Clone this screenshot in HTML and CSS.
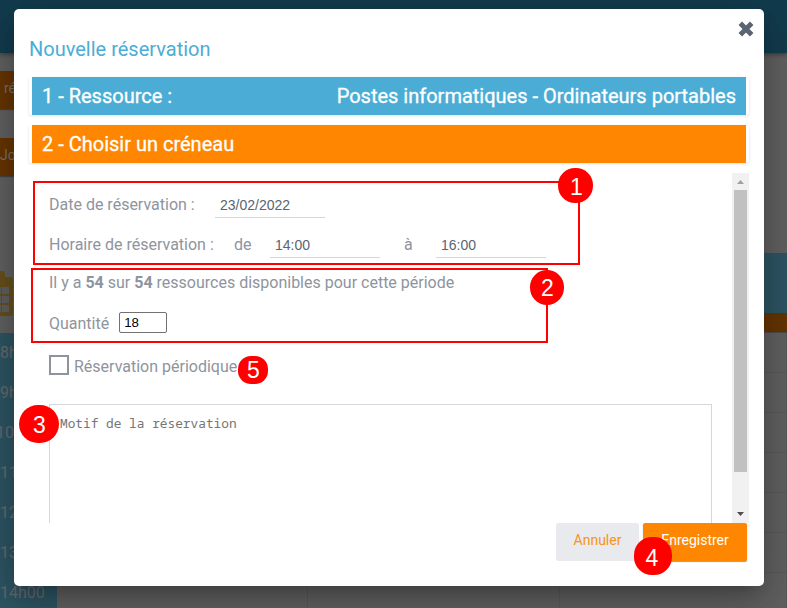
FILE: index.html
```
<!DOCTYPE html>
<html lang="fr">
<head>
<meta charset="utf-8">
<title>Nouvelle réservation</title>
<link rel="stylesheet" href="styles.css">
</head>
<body>
<div class="page">
  <header class="topbar"></header>
  <div class="toolbar"><div class="tab">e ré</div><div class="tab tab-day">Jo</div></div>
  <div class="planning">
    <div class="hours">
      <div class="corner">
        <svg width="14" height="46" viewBox="0 0 14 46"><path d="M0 0h2q3 0 3 3v3h5q3 0 3 3v33q0 3-3 3H0z" fill="#66501c"/><path d="M0 16h1v7H0zM2 16h7v7H2zM0 25h1v7H0zM2 25h7v7H2zM0 34h1v7H0zM2 34h7v7H2z" fill="#606060"/></svg>
      </div>
      <div class="hour">8h00</div><div class="hour">9h00</div><div class="hour hour-long">10h00</div><div class="hour">11h00</div><div class="hour">12h00</div><div class="hour">13h00</div><div class="hour">14h00</div>
    </div>
    <div class="days">
      <div class="dayhead"></div>
      <div class="allday"></div>
      <div class="slots">
        <i></i><i></i><i></i><i></i><i></i><i></i><i></i><i></i><i></i><i></i><i></i><i></i><i></i><i></i><i></i><i></i><i></i><i></i><i></i><i></i><i></i>
      </div>
    </div>
  </div>
</div>

<div class="modal">
  <svg class="close" width="18" height="18" viewBox="0 0 18 18"><path d="M3.300 3.300l11.400 11.400M14.700 3.300L3.300 14.700" stroke="#5a6472" stroke-width="5" stroke-linecap="butt"/></svg>
  <h1 class="title">Nouvelle réservation</h1>
  <div class="step"><div class="bar bar-blue"><span>1 - Ressource :</span><span>Postes informatiques - Ordinateurs portables</span></div></div>
  <div class="step"><div class="bar bar-orange"><span>2 - Choisir un créneau</span></div></div>
  <div class="scroller">
    <div class="form">
      <div class="row"><span class="label-date">Date de réservation :</span><span class="field">23/02/2022</span></div>
      <div class="row"><span class="label-time">Horaire de réservation :</span><span class="word-from">de</span><span class="field">14:00</span><span class="word-to">à</span><span class="field">16:00</span></div>
      <div class="available">Il y a <b>54</b> sur <b>54</b> ressources disponibles pour cette période</div>
      <div class="quantity"><span>Quantité</span><span class="number">18</span></div>
      <div class="periodic"><span class="box"></span><span>Réservation périodique</span></div>
      <div class="reason">Motif de la réservation</div>
    </div>
    <div class="scrollbar">
      <svg width="17" height="17" viewBox="0 0 17 17"><path d="M5 11h7L8.500 7z" fill="#a0a0a0"/></svg>
      <div class="thumb"></div>
      <svg class="down" width="17" height="17" viewBox="0 0 17 17"><path d="M5 6h7L8.500 10z" fill="#4d4d4d"/></svg>
    </div>
  </div>
  <div class="actions"><div class="btn btn-cancel">Annuler</div><div class="btn btn-save">Enregistrer</div></div>
</div>

<div class="frame frame-1"></div>
<div class="frame frame-2"></div>
<div class="mark mark-1">1</div>
<div class="mark mark-2">2</div>
<div class="mark mark-3">3</div>
<div class="mark mark-4">4</div>
<div class="mark mark-5">5</div>
</body>
</html>
```
FILE: styles.css
```
* { box-sizing: border-box; }
body { margin: 0; width: 787px; height: 608px; overflow: hidden; position: relative; font-family: Roboto, sans-serif; font-size: 16px; color: #8e949e; background: #616161; }
svg { display: block; }
.page { height: 608px; overflow: hidden; display: flex; flex-direction: column; }
.topbar { height: 53px; flex: none; background: #123c4e; box-shadow: 0 1px 5px rgba(0,0,0,.45); }
.toolbar { height: 124px; flex: none; padding-top: 18px; display: flex; flex-direction: column; gap: 29px; }
.tab { width: 50px; height: 38px; line-height: 34px; background: #663500; color: #77706a; font-size: 14px; text-indent: -7px; white-space: nowrap; box-shadow: 0 1px 1px #444; }
.tab-day { text-indent: 0; }
.planning { flex: 1; display: flex; min-height: 0; }
.hours { width: 57px; flex: none; }
.corner { height: 156px; padding-top: 94px; }
.hour { height: 40px; line-height: 39px; background: #2e5564; color: #666b6e; white-space: nowrap; }
.hour-long { text-indent: -4px; }
.days { flex: 1; padding-top: 76px; }
.dayhead { height: 60px; background: #2e5564; }
.allday { height: 20px; background: #663500; border-bottom: 1px solid #4c4c4c; }
.slots { display: grid; grid-template-columns: 251px 252px 1fr; grid-auto-rows: 40px; }
.slots i { border-right: 1px solid #595959; border-bottom: 1px solid #595959; }

.modal { position: absolute; left: 14px; top: 9px; width: 750px; height: 577px; background: #fff; border-radius: 5px; padding: 28px 15px 0; box-shadow: 0 11px 15px -7px rgba(0,0,0,.2), 0 16px 38px 3px rgba(0,0,0,.14), 0 9px 46px 8px rgba(0,0,0,.12); }
.close { position: absolute; left: 723px; top: 11px; }
.title { margin: 0 0 16px; height: 24px; line-height: 24px; font-size: 20px; font-weight: 400; color: #4badd6; }
.step { height: 38px; margin-bottom: 10px; padding: 0 3px; border-radius: 3px; box-shadow: 0 1px 3px rgba(0,0,0,.12); }
.bar { height: 38px; line-height: 38px; padding: 0 10px; display: flex; justify-content: space-between; color: #fff; font-size: 20px; font-weight: 400; -webkit-text-stroke: .3px #fff; }
.bar-blue { background: #4badd6; }
.bar-orange { background: #ff8600; }
.scroller { height: 350px; display: flex; overflow: hidden; }
.form { flex: 1; padding: 12px 20px 0; }
.row { height: 40px; display: flex; line-height: 39px; white-space: nowrap; }
.label-date { width: 166px; }
.label-time { width: 185px; }
.word-from { width: 36px; }
.word-to { width: 56px; padding-left: 24px; }
.field { width: 110px; height: 33px; border-bottom: 1px solid #d5d7df; padding-left: 5px; line-height: 41px; font-family: "Liberation Sans", sans-serif; font-size: 14px; color: #5a6472; }
.available { height: 32px; line-height: 36px; white-space: nowrap; }
.quantity { margin-top: 15px; height: 21px; display: flex; gap: 10px; line-height: 24px; }
.number { width: 48px; height: 21px; border: 1px solid #717171; border-radius: 2px; padding-left: 4px; line-height: 19px; font-family: "Liberation Sans", sans-serif; font-size: 13.3px; color: #000; }
.periodic { margin-top: 22px; height: 20px; display: flex; gap: 5px; line-height: 24px; }
.box { width: 20px; height: 20px; border: 2px solid #8e949e; }
.reason { margin-top: 29px; width: 663px; height: 150px; border: 1px solid #d5d7df; padding: 9px 10px; line-height: 18px; font-family: "Noto Sans Mono", "DejaVu Sans Mono", monospace; font-size: 12.8px; color: #757575; }
.scrollbar { width: 17px; height: 350px; background: #f1f1f1; display: flex; flex-direction: column; }
.thumb { width: 13px; height: 282px; margin-left: 2px; background: #c1c1c1; }
.down { margin-top: auto; }
.actions { display: flex; justify-content: flex-end; gap: 4px; padding-right: 2px; }
.btn { height: 38px; line-height: 34px; text-align: center; border-radius: 2px; font-size: 14px; }
.btn-cancel { width: 83px; background: #e9eaee; color: #f79320; }
.btn-save { width: 104px; background: #ff8600; color: #fff; box-shadow: 0 1px 1px #999; }

.frame { position: absolute; border: 2px solid #f00; }
.frame-1 { left: 33px; top: 181px; width: 547px; height: 84px; }
.frame-2 { left: 31px; top: 268px; width: 517px; height: 75px; }
.mark { position: absolute; display: flex; align-items: center; justify-content: center; background: #f00; color: #fff; font-family: "Liberation Sans", sans-serif; font-size: 23px; line-height: 1; padding: 2px 0 0 1px; }
.mark-1 { left: 558px; top: 168px; width: 35px; height: 35px; border-radius: 17px; padding: 4px 0 0 2px; }
.mark-2 { left: 530px; top: 270px; width: 34px; height: 35px; border-radius: 17px; }
.mark-3 { left: 19px; top: 405px; width: 40px; height: 38px; border-radius: 19px; }
.mark-4 { left: 634px; top: 537px; width: 38px; height: 38px; border-radius: 18px; padding: 4px 2px 0 0; }
.mark-5 { left: 238px; top: 356px; width: 30px; height: 28px; border-radius: 13px; padding-top: 0; }
```
